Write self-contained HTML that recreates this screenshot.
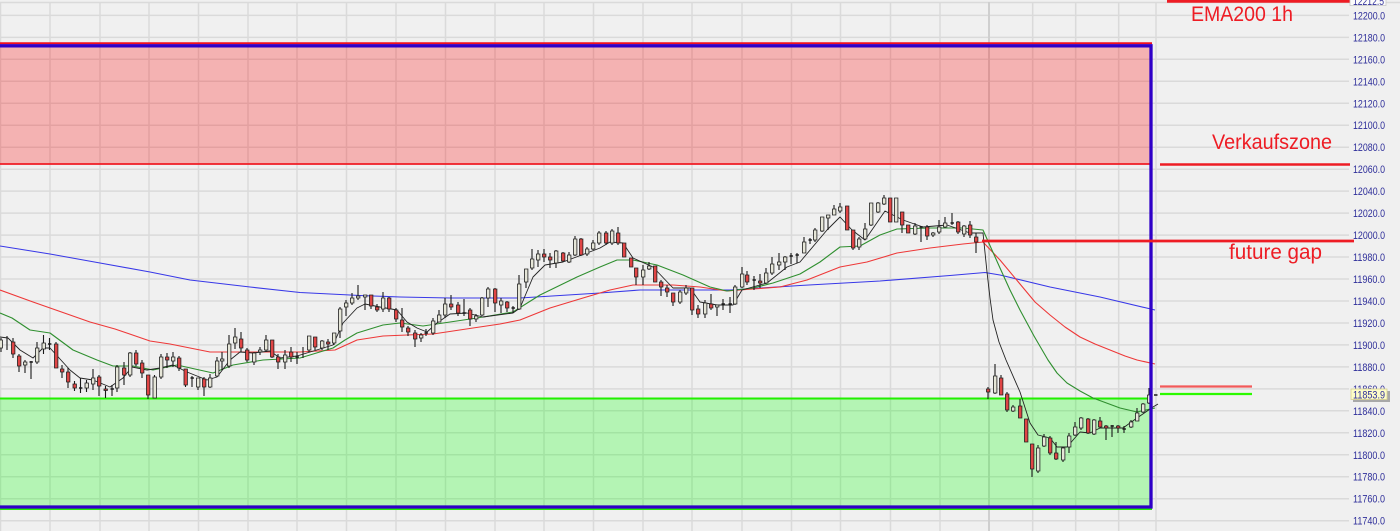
<!DOCTYPE html>
<html><head><meta charset="utf-8"><style>html,body{margin:0;padding:0;background:#f0f0f0;overflow:hidden}svg{display:block;filter:blur(.35px)}</style></head><body>
<svg width="1400" height="531" viewBox="0 0 1400 531" xmlns="http://www.w3.org/2000/svg" font-family="'Liberation Sans',sans-serif">
<rect x="-5" y="-5" width="1410" height="541" fill="#f0f0f0"/>
<g stroke="#dadada" stroke-width="1.5" fill="none">
<path d="M0 2.5H1400M0 15.4H1349M0 37.4H1349M0 59.3H1349M0 81.3H1349M0 103.3H1349M0 125.2H1349M0 147.2H1349M0 169.2H1349M0 191.1H1349M0 213.1H1349M0 235.1H1349M0 257H1349M0 279H1349M0 301H1349M0 323H1349M0 344.9H1349M0 366.9H1349M0 388.9H1349M0 410.8H1349M0 432.8H1349M0 454.8H1349M0 476.7H1349M0 498.7H1349M0 520.7H1349"/>
<path d="M0.5 2V531M50 2V531M100 2V531M149 2V531M198.5 2V531M248 2V531M297 2V531M346.5 2V531M396 2V531M445.5 2V531M495 2V531M544 2V531M593.5 2V531M643 2V531M692 2V531M742 2V531M791.5 2V531M840.5 2V531M890.5 2V531M940 2V531M1032.7 2V531M1075.7 2V531M1118.7 2V531M1156 2V531"/>
<path d="M989 2V531" stroke="#cfcfcf" stroke-width="2"/>
</g>
<rect x="0" y="47" width="1150" height="117" fill="#ff0000" fill-opacity=".26"/>
<rect x="0" y="399" width="1150" height="107" fill="#00ff00" fill-opacity=".25"/>
<path d="M0 43.3H1152" stroke="#f01020" stroke-width="2"/>
<path d="M0 164H1150" stroke="#f01c24" stroke-width="1.8"/>
<path d="M0 398.5H1150" stroke="#22f000" stroke-width="2"/>
<path d="M0 509H1152" stroke="#22ee00" stroke-width="2"/>

<g fill="none" stroke-width="1.1" stroke-linejoin="round">
<path stroke="#3838e8" d="M0 246L50 254L100 263L150 272L190 280L250 287L300 292.5L360 295.5L400 297L450 298L520 298L560 295.5L600 293L640 290L700 290L730 290L800 285.5L880 281L950 275.5L985 272.5L1000 275L1050 287L1100 297L1155 310"/>
<path stroke="#ee3838" d="M0 290L33 302L90 322L115 329L150 341L170 344L210 352L240 352L300 352L335 350L357 340L383 336L407 335L433 334L473 328L500 324L520 320L550 308L583 298L610 290L633 285L673 285L700 287L727 291L753 289L780 287L807 280L840 267L867 262L897 253L930 248L963 244L983 242L1000 260L1020 284L1035 302L1050 315L1065 327L1080 337L1095 344L1110 350L1125 356L1137 360L1155 364"/>
<path stroke="#2f8f2f" d="M0 313L12 318L30 330L50 333L73 350L97 360L113 366L133 366L153 370L177 365L213 373L233 365L263 360L300 358L333 348L345 340L357 333L383 325L400 323L423 326L450 322L477 318L513 312L540 295L577 277L600 267L617 260L633 260L657 265L683 275L710 287L727 291L753 288L773 283L800 274L820 262L840 247L860 246L880 235L897 229L930 228L963 228L983 230L1000 268L1010 290L1020 310L1034 336L1048 360L1057 373L1067 383L1080 391L1093 398L1120 408L1137 412L1155 408"/>
<path stroke="#222" stroke-width=".9" d="M0 337L8 338L20 350L33 358L43 348L50 348L70 370L80 378L93 380L110 387L123 378L132 367L147 370L160 368L173 365L187 372L207 380L217 377L230 360L240 352L253 353L270 351L280 358L297 356L333 345L343 323L357 308L365 304L380 307L397 310L407 322L417 328L427 332L437 323L450 314L467 313L483 317L513 313L520 308L533 277L545 265L563 262L587 253L600 248L610 242L623 243L633 258L653 267L673 288L690 288L700 302L717 305L733 305L742 290L767 283L787 267L800 262L827 230L840 217L852 230L865 240L885 211L903 220L923 227L947 225L970 233L983 233L987 272L990 298L993 320L999 342L1006 360L1020 392L1030 423L1038 435L1050 438L1057 447L1067 447L1080 432L1090 433L1100 428L1123 428L1137 418L1153 407L1158 404"/>
</g>

<path fill="none" stroke="#1a1a1a" stroke-width="1.1" d="M1 338V352M7 336V350M13 338V358M19 354V372M25 360V373M31 361V379M37 342V364M43.5 335V354M49.5 338V350M56 342V368M62 365V378M68 368V388M74.5 381V391M80.5 378V393M86.5 380V392M93 369V390M99 375V396M105.5 386V398M112 385V396M117 365V392M124 362V385M130 352V377M136 350V366M142 360V378M148 375V399M154.5 375V398M161 354V379M167 353V368M173 352V367M179 356V371M185.5 369V387M192 376V387M198 378V390M204 377V396M210 374V388M217 357V377M222 352V370M229 335V368M235 328V349M241 332V352M247 348V362M254 352V365M260 347V355M266 335V352M272 340V358M278 354V369M285 350V369M291 347V362M297 352V364M303 347V358M309 336V352M315 337V350M322 340V350M328 339V350M334 333V345M340 307V338M346 300V316M352 293V305M358 285V300M365 295V310M371 295V309M377 304V312M383 292V312M389 297V312M396 308V322M402 308V332M408 326V336M415 330V347M421 333V342M426 329V336M433 318V335M439 310V322M445 298V318M451 295V310M458 302V316M464 299V316M470 308V326M476 314V322M482 297V316M488 287V307M495 288V312M501 298V313M507 301V312M513 306V313M519 275V310M526 269V288M532 249V270M538 250V267M544 249V262M550 253V268M556 250V268M563 252V262M569 252V263M575 236V256M581 238V256M587 247V256M593 240V250M599 231V245M606 231V245M612 229V245M618 227V245M624 243V257M631 258V267M636 268V285M643 265V285M649 262V270M655 266V282M661 280V296M667 285V297M673 293V306M680 290V304M686 285V295M692 288V315M698 305V318M705 300V318M711 294V310M717 305V316M723 299V310M730 297V313M735 285V305M742 267V288M747 271V285M754 276V290M760 274V288M766 268V284M772 257V275M779 253V270M785 256V270M791 253V264M797 253V263M804 237V253M810 238V244M815 228V242M822 217V232M828 215V230M834 205V215M840 203V213M847 206V230M853 230V250M859 237V250M865 223V240M871 203V226M878 202V213M884 195V205M890 198V222M896 198V222M902 212V233M908 225V233M915 223V235M921 226V242M927 225V240M933 232V237M939 220V234M945 217V228M952 213V225M958 221V234M964 225V237M970 221V238M976 233V253M988 387V399M995 364V394M1001 375V395M1007 392V412M1013 405V412M1020 399V418M1026 419V442M1032 444V477M1038 445V473M1044 434V447M1050 436V455M1056 442V460M1063 447V462M1069 433V453M1075 422V436M1081 417V430M1088 418V434M1094 419V435M1100 417V428M1106 425V440M1112 425V437M1118 425V433M1124 426V433M1131 420V428M1137 408V421M1143 403V413M1149 388V404"/>
<path fill="#e6e6d8" stroke="#1f1f1f" stroke-width=".8" d="M-1 340h3.4v8h-3.4zM23.5 362h3.4v3h-3.4zM35.5 348h3.4v14h-3.4zM42 343h3.4v6h-3.4zM85 383h3.4v5h-3.4zM91.5 378h3.4v6h-3.4zM115.5 367h3.4v21h-3.4zM128.5 353h3.4v22h-3.4zM153 377h3.4v21h-3.4zM159.5 357h3.4v20h-3.4zM171.5 357h3.4v4h-3.4zM196.5 378h3.4v9h-3.4zM208.5 378h3.4v9h-3.4zM215.5 361h3.4v15h-3.4zM220.5 359h3.4v2h-3.4zM227.5 344h3.4v22h-3.4zM233.5 337h3.4v6h-3.4zM252.5 353h3.4v9h-3.4zM258.5 350h3.4v2h-3.4zM264.5 340h3.4v10h-3.4zM283.5 355h3.4v7h-3.4zM307.5 336h3.4v14h-3.4zM320.5 341h3.4v7h-3.4zM332.5 333h3.4v10h-3.4zM338.5 309h3.4v22h-3.4zM344.5 303h3.4v4h-3.4zM350.5 298h3.4v5h-3.4zM356.5 296h3.4v2h-3.4zM363.5 295h3.4v2h-3.4zM381.5 298h3.4v11h-3.4zM419.5 335h3.4v3h-3.4zM431.5 321h3.4v12h-3.4zM437.5 315h3.4v7h-3.4zM443.5 304h3.4v11h-3.4zM474.5 316h3.4v3h-3.4zM480.5 298h3.4v17h-3.4zM486.5 289h3.4v9h-3.4zM499.5 301h3.4v4h-3.4zM517.5 284h3.4v25h-3.4zM524.5 269h3.4v13h-3.4zM530.5 259h3.4v9h-3.4zM536.5 254h3.4v6h-3.4zM554.5 251h3.4v12h-3.4zM567.5 255h3.4v7h-3.4zM573.5 239h3.4v16h-3.4zM585.5 249h3.4v5h-3.4zM591.5 243h3.4v6h-3.4zM597.5 233h3.4v10h-3.4zM610.5 231h3.4v12h-3.4zM641.5 270h3.4v7h-3.4zM647.5 266h3.4v3h-3.4zM678.5 292h3.4v10h-3.4zM684.5 288h3.4v5h-3.4zM703.5 303h3.4v11h-3.4zM715.5 305h3.4v2h-3.4zM733.5 287h3.4v17h-3.4zM740.5 274h3.4v13h-3.4zM764.5 273h3.4v10h-3.4zM770.5 264h3.4v9h-3.4zM777.5 262h3.4v3h-3.4zM783.5 257h3.4v5h-3.4zM802.5 242h3.4v11h-3.4zM813.5 230h3.4v10h-3.4zM820.5 217h3.4v14h-3.4zM826.5 215h3.4v3h-3.4zM832.5 209h3.4v6h-3.4zM838.5 207h3.4v4h-3.4zM857.5 239h3.4v8h-3.4zM863.5 229h3.4v10h-3.4zM869.5 203h3.4v22h-3.4zM876.5 203h3.4v9h-3.4zM882.5 198h3.4v6h-3.4zM894.5 198h3.4v24h-3.4zM913.5 226h3.4v8h-3.4zM931.5 233h3.4v2h-3.4zM937.5 227h3.4v5h-3.4zM943.5 223h3.4v4h-3.4zM962.5 226h3.4v8h-3.4zM993.5 376h3.4v17h-3.4zM1011.5 407h3.4v4h-3.4zM1036.5 448h3.4v23h-3.4zM1042.5 437h3.4v9h-3.4zM1061.5 448h3.4v12h-3.4zM1067.5 436h3.4v11h-3.4zM1073.5 427h3.4v8h-3.4zM1079.5 418h3.4v10h-3.4zM1092.5 420h3.4v14h-3.4zM1129.5 422h3.4v5h-3.4zM1135.5 413h3.4v8h-3.4zM1141.5 404h3.4v8h-3.4zM1147.5 395h3.4v8h-3.4z"/>
<path fill="#e04545" stroke="#1f1f1f" stroke-width=".8" d="M11.5 342h3.4v12h-3.4zM17.5 356h3.4v10h-3.4zM54.5 344h3.4v24h-3.4zM60.5 369h3.4v3h-3.4zM66.5 372h3.4v10h-3.4zM73 384h3.4v4h-3.4zM97.5 377h3.4v9h-3.4zM104 389h3.4v1.5h-3.4zM122.5 368h3.4v7h-3.4zM134.5 353h3.4v11h-3.4zM140.5 363h3.4v10h-3.4zM146.5 375h3.4v20h-3.4zM165.5 357h3.4v3h-3.4zM177.5 358h3.4v10h-3.4zM184 369h3.4v16h-3.4zM202.5 379h3.4v8h-3.4zM239.5 339h3.4v9h-3.4zM245.5 350h3.4v10h-3.4zM270.5 340h3.4v17h-3.4zM276.5 357h3.4v5h-3.4zM289.5 352h3.4v5h-3.4zM313.5 337h3.4v10h-3.4zM326.5 342h3.4v2h-3.4zM369.5 295h3.4v11h-3.4zM375.5 307h3.4v3h-3.4zM387.5 298h3.4v11h-3.4zM394.5 310h3.4v9h-3.4zM400.5 320h3.4v7h-3.4zM406.5 328h3.4v4h-3.4zM413.5 333h3.4v6h-3.4zM449.5 304h3.4v3h-3.4zM456.5 305h3.4v8h-3.4zM468.5 310h3.4v9h-3.4zM493.5 289h3.4v14h-3.4zM505.5 302h3.4v6h-3.4zM542.5 254h3.4v3h-3.4zM548.5 257h3.4v3h-3.4zM561.5 253h3.4v8h-3.4zM579.5 239h3.4v16h-3.4zM604.5 233h3.4v10h-3.4zM616.5 233h3.4v10h-3.4zM622.5 243h3.4v14h-3.4zM629.5 258h3.4v9h-3.4zM634.5 268h3.4v9h-3.4zM653.5 266h3.4v16h-3.4zM659.5 282h3.4v5h-3.4zM665.5 288h3.4v4h-3.4zM671.5 293h3.4v9h-3.4zM690.5 288h3.4v22h-3.4zM696.5 309h3.4v5h-3.4zM709.5 304h3.4v4h-3.4zM745.5 275h3.4v7h-3.4zM758.5 281h3.4v2h-3.4zM845.5 206h3.4v24h-3.4zM851.5 230h3.4v18h-3.4zM888.5 198h3.4v24h-3.4zM900.5 212h3.4v13h-3.4zM906.5 225h3.4v8h-3.4zM925.5 227h3.4v9h-3.4zM956.5 222h3.4v10h-3.4zM968.5 225h3.4v10h-3.4zM974.5 237h3.4v5h-3.4zM986.5 389h3.4v3h-3.4zM999.5 378h3.4v17h-3.4zM1005.5 394h3.4v16h-3.4zM1018.5 406h3.4v12h-3.4zM1024.5 419h3.4v23h-3.4zM1030.5 444h3.4v25h-3.4zM1048.5 438h3.4v15h-3.4zM1054.5 453h3.4v6h-3.4zM1086.5 419h3.4v14h-3.4zM1098.5 421h3.4v6h-3.4zM1104.5 426h3.4v2h-3.4zM1116.5 426h3.4v2h-3.4z"/>
<path fill="none" stroke="#1a1a1a" stroke-width="1.5" d="M29.5 362h3.4M48 344h3.4M79 388h3.4M110.5 389h3.4M190.5 378h3.4M295.5 357h3.4M424.5 333h3.4M462.5 313h3.4M511.5 308h3.4M721.5 304h3.4M728.5 304h3.4M752.5 280h3.4M789.5 256h3.4M795.5 255h3.4M808.5 240h3.4M919.5 227h3.4M950.5 223h3.4M1110.5 426h3.4M1122.5 429h3.4M1154 395h3.5"/>

<path d="M0 45.8H1151V507H0" fill="none" stroke="#2f00c8" stroke-width="3.3"/>

<path d="M1167 1.2H1350" stroke="#ee1c24" stroke-width="3"/>
<path d="M1160 164.5H1350" stroke="#ee1c24" stroke-width="2.4"/>
<path d="M982 241H1354" stroke="#ee1c24" stroke-width="2.8"/>
<path d="M1160 386.5H1252" stroke="#f25a5a" stroke-width="2.2"/>
<path d="M1160 394H1252" stroke="#2bfa00" stroke-width="2.2"/>
<g fill="#ee1c24" font-size="21">
<text x="1191" y="21" textLength="102" lengthAdjust="spacingAndGlyphs">EMA200 1h</text>
<text x="1212" y="149" textLength="120" lengthAdjust="spacingAndGlyphs">Verkaufszone</text>
<text x="1229" y="259" textLength="93" lengthAdjust="spacingAndGlyphs">future gap</text>
</g>

<g fill="#2f2f9a" font-size="11" lengthAdjust="spacingAndGlyphs">
<text x="1353" y="19.4" textLength="32" lengthAdjust="spacingAndGlyphs">12200.0</text>
<text x="1353" y="41.4" textLength="32" lengthAdjust="spacingAndGlyphs">12180.0</text>
<text x="1353" y="63.3" textLength="32" lengthAdjust="spacingAndGlyphs">12160.0</text>
<text x="1353" y="85.3" textLength="32" lengthAdjust="spacingAndGlyphs">12140.0</text>
<text x="1353" y="107.3" textLength="32" lengthAdjust="spacingAndGlyphs">12120.0</text>
<text x="1353" y="129.2" textLength="32" lengthAdjust="spacingAndGlyphs">12100.0</text>
<text x="1353" y="151.2" textLength="32" lengthAdjust="spacingAndGlyphs">12080.0</text>
<text x="1353" y="173.2" textLength="32" lengthAdjust="spacingAndGlyphs">12060.0</text>
<text x="1353" y="195.1" textLength="32" lengthAdjust="spacingAndGlyphs">12040.0</text>
<text x="1353" y="217.1" textLength="32" lengthAdjust="spacingAndGlyphs">12020.0</text>
<text x="1353" y="239.1" textLength="32" lengthAdjust="spacingAndGlyphs">12000.0</text>
<text x="1353" y="261" textLength="32" lengthAdjust="spacingAndGlyphs">11980.0</text>
<text x="1353" y="283" textLength="32" lengthAdjust="spacingAndGlyphs">11960.0</text>
<text x="1353" y="305" textLength="32" lengthAdjust="spacingAndGlyphs">11940.0</text>
<text x="1353" y="327" textLength="32" lengthAdjust="spacingAndGlyphs">11920.0</text>
<text x="1353" y="348.9" textLength="32" lengthAdjust="spacingAndGlyphs">11900.0</text>
<text x="1353" y="370.9" textLength="32" lengthAdjust="spacingAndGlyphs">11880.0</text>
<text x="1353" y="392.9" textLength="32" lengthAdjust="spacingAndGlyphs">11860.0</text>
<text x="1353" y="414.8" textLength="32" lengthAdjust="spacingAndGlyphs">11840.0</text>
<text x="1353" y="436.8" textLength="32" lengthAdjust="spacingAndGlyphs">11820.0</text>
<text x="1353" y="458.8" textLength="32" lengthAdjust="spacingAndGlyphs">11800.0</text>
<text x="1353" y="480.7" textLength="32" lengthAdjust="spacingAndGlyphs">11780.0</text>
<text x="1353" y="502.7" textLength="32" lengthAdjust="spacingAndGlyphs">11760.0</text>
<text x="1353" y="524.7" textLength="32" lengthAdjust="spacingAndGlyphs">11740.0</text>
</g>
<rect x="1350" y="-3" width="36" height="8.5" fill="#fbfbfb" stroke="#c9c9c9" stroke-width=".8"/>
<text x="1353" y="5" fill="#2f2f9a" font-size="11" textLength="31" lengthAdjust="spacingAndGlyphs">12212.5</text>
<rect x="1353" y="391" width="37" height="11" fill="#a8a8a8"/>
<rect x="1351" y="389" width="36" height="10.5" fill="#fdfdc8" stroke="#d8d090" stroke-width=".8"/>
<text x="1353" y="398.3" fill="#2f2f9a" font-size="11" textLength="32" lengthAdjust="spacingAndGlyphs">11853.9</text>
</svg>
</body></html>
